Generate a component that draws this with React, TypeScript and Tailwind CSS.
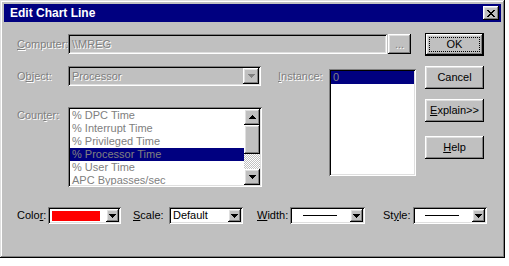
import React from "react";

const raised =
    "bg-[#c0c0c0] shadow-[inset_-1px_-1px_#000,inset_1px_1px_#fff,inset_-2px_-2px_#808080,inset_2px_2px_#dfdfdf]";
const sunken =
    "shadow-[inset_1px_1px_#808080,inset_-1px_-1px_#fff,inset_2px_2px_#000,inset_-2px_-2px_#dfdfdf]";
const disabledText = "text-[#808080] [text-shadow:1px_1px_0_#fff]";

const DownArrow = ({ color = "#000" }: { color?: string }) => (
    <svg width="7" height="4" viewBox="0 0 7 4" fill={color}>
        <path d="M0 0h7v1H0zM1 1h5v1H1zM2 2h3v1H2zM3 3h1v1H3z" />
    </svg>
);

const UpArrow = () => (
    <svg width="7" height="4" viewBox="0 0 7 4" fill="#000">
        <path d="M3 0h1v1H3zM2 1h3v1H2zM1 2h5v1H1zM0 3h7v1H0z" />
    </svg>
);

const CloseGlyph = () => (
    <svg width="8" height="7" viewBox="0 0 8 7" fill="#000">
        <path d="M0 0h2v1H0zM6 0h2v1H6zM1 1h2v1H1zM5 1h2v1H5zM2 2h4v1H2zM3 3h2v1H3zM2 4h4v1H2zM1 5h2v1H1zM5 5h2v1H5zM0 6h2v1H0zM6 6h2v1H6z" />
    </svg>
);

const Button = ({ children, isDefault }: { children: React.ReactNode; isDefault?: boolean }) => {
    if (isDefault) {
        return (
            <div className="w-[59px] h-[23px] border border-black">
                <div className={`${raised} w-full h-full p-[3px]`}>
                    <div className="w-full h-full border border-dotted border-black flex items-center justify-center">
                        {children}
                    </div>
                </div>
            </div>
        );
    }
    return (
        <div className={`${raised} w-[59px] h-[23px] flex items-center justify-center`}>
            {children}
        </div>
    );
};

const SmallCombo = ({ children, width }: { children: React.ReactNode; width: string }) => (
    <div className={`${sunken} bg-white h-[17px] p-[2px] flex items-center ${width}`}>
        <div className="flex-1 h-full flex items-center overflow-hidden">{children}</div>
        <div className={`${raised} w-[13px] h-[13px] flex items-center justify-center`}>
            <DownArrow />
        </div>
    </div>
);

const counters = [
    "% DPC Time",
    "% Interrupt Time",
    "% Privileged Time",
    "% Processor Time",
    "% User Time",
    "APC Bypasses/sec",
];

export default function App() {
    return (
        <div className="min-h-screen bg-white font-['Liberation_Sans',Arial,sans-serif] text-[11px] leading-[13px] text-black">
            <div className="w-[505px] h-[258px] p-[4px] bg-[#c0c0c0] shadow-[inset_-1px_-1px_#000,inset_1px_1px_#dfdfdf,inset_-2px_-2px_#808080,inset_2px_2px_#fff]">
                {/* title bar */}
                <div className="h-[18px] bg-[#000080] flex items-center justify-between pl-[6px] pr-[2px]">
                    <span className="text-white font-bold text-[12px]">Edit Chart Line</span>
                    <div className={`${raised} w-[16px] h-[14px] flex items-center justify-center`}>
                        <CloseGlyph />
                    </div>
                </div>

                <div className="flex pl-[13px]">
                    <div className="w-[399px] pt-[12px]">
                        {/* computer row */}
                        <div className="flex items-center h-[20px]">
                            <span className={`w-[51px] ${disabledText}`}>
                                <span className="underline">C</span>omputer:
                            </span>
                            <div className={`${sunken} w-[319px] h-[20px] flex items-center pl-[4px] ${disabledText}`}>
                                \\MREG
                            </div>
                            <div className={`${raised} ml-[1px] w-[23px] h-[20px] flex items-center justify-center ${disabledText}`}>
                                ...
                            </div>
                        </div>

                        <div className="flex mt-[12px]">
                            <div className="w-[245px]">
                                {/* object row */}
                                <div className="flex items-center h-[20px]">
                                    <span className={`w-[51px] ${disabledText}`}>
                                        O<span className="underline">b</span>ject:
                                    </span>
                                    <div className={`${sunken} w-[193px] h-[20px] p-[2px] flex items-center`}>
                                        <span className={`flex-1 pl-[2px] ${disabledText}`}>Processor</span>
                                        <div className={`${raised} w-[16px] h-[16px] flex items-center justify-center`}>
                                            <DownArrow color="#808080" />
                                        </div>
                                    </div>
                                </div>

                                {/* counter row */}
                                <div className="flex mt-[21px]">
                                    <span className={`w-[51px] pt-[2px] ${disabledText}`}>
                                        Coun<span className="underline">t</span>er:
                                    </span>
                                    <div className={`${sunken} bg-white w-[194px] h-[80px] p-[2px] flex`}>
                                        <div className="flex-1 overflow-hidden">
                                            {counters.map((c, i) => (
                                                <div
                                                    key={c}
                                                    className={`h-[13px] pl-[2px] whitespace-nowrap text-[#808080] ${i === 3 ? "bg-[#000080]" : ""}`}
                                                >
                                                    {c}
                                                </div>
                                            ))}
                                        </div>
                                        <div className="w-[16px] flex flex-col">
                                            <div className={`${raised} h-[16px] flex items-center justify-center`}>
                                                <UpArrow />
                                            </div>
                                            <div className={`${raised} h-[29px]`} />
                                            <div className="flex-1 bg-[image:repeating-conic-gradient(#c0c0c0_0_25%,#fff_0_50%)] bg-[length:2px_2px]" />
                                            <div className={`${raised} h-[16px] flex items-center justify-center`}>
                                                <DownArrow />
                                            </div>
                                        </div>
                                    </div>
                                </div>
                            </div>

                            {/* instance */}
                            <div className="ml-[16px] mt-[3px] flex">
                                <span className={`w-[51px] pt-[1px] ${disabledText}`}>
                                    <span className="underline">I</span>nstance:
                                </span>
                                <div className={`${sunken} bg-white w-[87px] h-[107px] p-[2px]`}>
                                    <div className="h-[13px] pl-[2px] bg-[#000080] text-[#808080]">0</div>
                                </div>
                            </div>
                        </div>
                    </div>

                    {/* buttons */}
                    <div className="ml-[9px] pt-[11px] flex flex-col">
                        <Button isDefault>OK</Button>
                        <div className="mt-[10px]">
                            <Button>Cancel</Button>
                        </div>
                        <div className="mt-[10px]">
                            <Button>
                                <span>
                                    <span className="underline">E</span>xplain&gt;&gt;
                                </span>
                            </Button>
                        </div>
                        <div className="mt-[14px]">
                            <Button>
                                <span>
                                    <span className="underline">H</span>elp
                                </span>
                            </Button>
                        </div>
                    </div>
                </div>

                {/* bottom row */}
                <div className="flex pl-[13px] mt-[20px]">
                    <div className="w-[116px] flex items-center">
                        <span className="w-[31px]">
                            Colo<span className="underline">r</span>:
                        </span>
                        <SmallCombo width="w-[73px]">
                            <div className="ml-[2px] w-[48px] h-[10px] bg-[#ff0000]" />
                        </SmallCombo>
                    </div>
                    <div className="w-[124px] flex items-center">
                        <span className="w-[36px]">
                            <span className="underline">S</span>cale:
                        </span>
                        <SmallCombo width="w-[74px]">
                            <span className="pl-[2px]">Default</span>
                        </SmallCombo>
                    </div>
                    <div className="w-[126px] flex items-center">
                        <span className="w-[33px]">
                            <span className="underline">W</span>idth:
                        </span>
                        <SmallCombo width="w-[75px]">
                            <div className="ml-[11px] w-[34px] h-px bg-black" />
                        </SmallCombo>
                    </div>
                    <div className="flex items-center">
                        <span className="w-[30px]">
                            St<span className="underline">y</span>le:
                        </span>
                        <SmallCombo width="w-[74px]">
                            <div className="ml-[10px] w-[34px] h-px bg-black" />
                        </SmallCombo>
                    </div>
                </div>
            </div>
        </div>
    );
}
